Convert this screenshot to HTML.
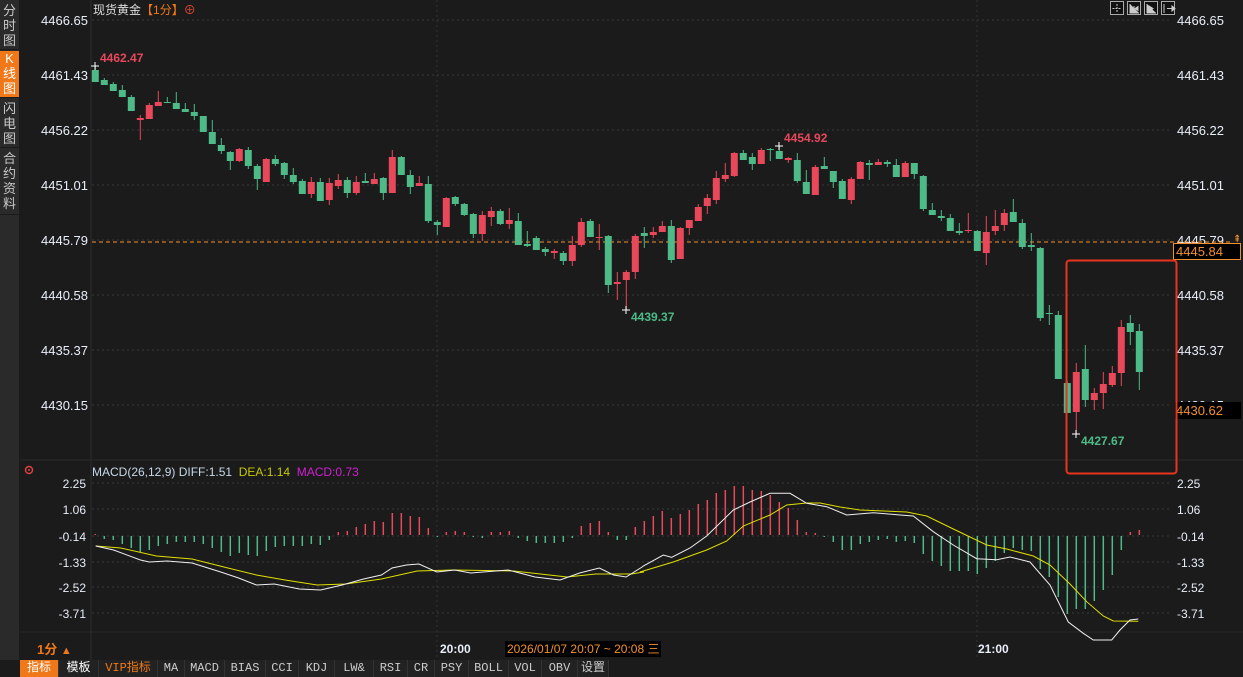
<!DOCTYPE html>
<html><head><meta charset="utf-8"><style>
*{margin:0;padding:0;box-sizing:border-box}
body{width:1243px;height:677px;background:#1b1b1c;overflow:hidden;position:relative;font-family:"Liberation Sans","Noto Sans CJK SC",sans-serif}
.side{position:absolute;left:0;top:0;width:19px;height:660px;background:#2a2a2b}
.side div{position:absolute;left:0;width:19px;color:#c8c8c8;font-size:13px;line-height:15px;text-align:center;border-bottom:1px solid #1b1b1c}
.tb{position:absolute;top:660px;height:17px;font-size:12px;line-height:17px;color:#ccc;text-align:center;background:#222;font-family:"Liberation Mono","Noto Sans CJK SC",monospace;border-right:1px solid #333}
.ax{position:absolute;font-size:13px;color:#e8eef8;line-height:14px}
</style></head><body>
<div class="side">
<div style="top:3px;height:47px">分<br>时<br>图</div>
<div style="top:51px;height:47px;background:#f07818;color:#fff">K<br>线<br>图</div>
<div style="top:101px;height:47px">闪<br>电<br>图</div>
<div style="top:151px;height:64px">合<br>约<br>资<br>料</div>
</div>
<svg id="c" width="1243" height="677" style="position:absolute;left:0;top:0"></svg>
<div class="ax" style="left:93px;top:3px;color:#ddd;font-size:12px">现货黄金<span style="color:#f07818">【1分】</span><span style="color:#e04a30">⊕</span></div>
<div class="ax" style="left:92px;top:465px;font-size:12px;color:#c8d8e8">MACD(26,12,9) DIFF:1.51 &nbsp;<span style="color:#c8c800">DEA:1.14</span> &nbsp;<span style="color:#d020d0">MACD:0.73</span></div>
<div class="ax" style="left:37px;top:643px;color:#f07818;font-weight:bold">1分 <span style="font-size:11px">▲</span></div>
<div class="ax" style="left:440px;top:642px;font-weight:bold;font-size:12px">20:00</div>
<div class="ax" style="left:978px;top:642px;font-weight:bold;font-size:12px">21:00</div>
<div class="ax" style="left:505px;top:641px;background:#000;color:#f09030;font-size:12px;padding:1px 2px">2026/01/07 20:07 ~ 20:08 三</div>
<div class="tb" style="left:20px;width:39px;background:#f07818;color:#fff">指标</div>
<div class="tb" style="left:59px;width:40px;color:#fff">模板</div>
<div class="tb" style="left:99px;width:59px;color:#f07818">VIP指标</div>
<div class="tb" style="left:158px;width:27px">MA</div>
<div class="tb" style="left:185px;width:40px">MACD</div>
<div class="tb" style="left:225px;width:41px">BIAS</div>
<div class="tb" style="left:266px;width:33px">CCI</div>
<div class="tb" style="left:299px;width:36px">KDJ</div>
<div class="tb" style="left:335px;width:39px">LW&amp;</div>
<div class="tb" style="left:374px;width:34px">RSI</div>
<div class="tb" style="left:408px;width:27px">CR</div>
<div class="tb" style="left:435px;width:34px">PSY</div>
<div class="tb" style="left:469px;width:40px">BOLL</div>
<div class="tb" style="left:509px;width:33px">VOL</div>
<div class="tb" style="left:542px;width:36px">OBV</div>
<div class="tb" style="left:578px;width:31px">设置</div>
<script>
var NS="http://www.w3.org/2000/svg",S=document.getElementById('c'),h='';
var G='#4dba87',R='#e8485a';
// grid
[20,75,130,185,240,295,350,405].forEach(function(y){h+='<line x1="92" y1="'+y+'" x2="1172" y2="'+y+'" stroke="#3a3a3a" stroke-dasharray="2,3"/>';});
[483,509,536,562,587,613].forEach(function(y){h+='<line x1="92" y1="'+y+'" x2="1172" y2="'+y+'" stroke="#3a3a3a" stroke-dasharray="2,3"/>';});
[437,977].forEach(function(x){h+='<line x1="'+x+'" y1="0" x2="'+x+'" y2="660" stroke="#333" stroke-dasharray="2,3"/>';});
h+='<line x1="91" y1="0" x2="91" y2="660" stroke="#2c2c2c"/>';
h+='<line x1="20" y1="460" x2="1243" y2="460" stroke="#2a2a2a"/>';
h+='<line x1="20" y1="632" x2="1243" y2="632" stroke="#2a2a2a"/>';
// axis labels
var pl=[['4466.65',20],['4461.43',75],['4456.22',130],['4451.01',185],['4445.79',240],['4440.58',295],['4435.37',350],['4430.15',405]];
pl.forEach(function(p){h+='<text x="88" y="'+(p[1]+5)+'" text-anchor="end" fill="#e8eef8" font-size="13" font-family="Liberation Sans">'+p[0]+'</text><text x="1177" y="'+(p[1]+5)+'" fill="#e8eef8" font-size="13" font-family="Liberation Sans">'+p[0]+'</text>';});
var ml=[['2.25',483],['1.06',509],['-0.14',536],['-1.33',562],['-2.52',587],['-3.71',613]];
ml.forEach(function(p){h+='<text x="86" y="'+(p[1]+5)+'" text-anchor="end" fill="#e8eef8" font-size="12" font-family="Liberation Sans">'+p[0]+'</text><text x="1177" y="'+(p[1]+5)+'" fill="#e8eef8" font-size="12" font-family="Liberation Sans">'+p[0]+'</text>';});
// orange dashed
h+='<line x1="92" y1="242" x2="1233" y2="242" stroke="#f09030" stroke-dasharray="4,3"/>';
h+='<rect x="1173.5" y="243.5" width="67" height="16" fill="#000" stroke="#f09030"/><text x="1176" y="256" fill="#f09030" font-size="13" font-family="Liberation Sans">4445.84</text>';
h+='<rect x="1175" y="402" width="66" height="17" fill="#000"/><text x="1176" y="415" fill="#f09030" font-size="13" font-family="Liberation Sans">4430.62</text>';
h+='<text x="1233" y="242" fill="#f09030" font-size="10">⇞</text>';
// candles
var C=[[70,82,66,82,G],[80,85,78,85,G],[84,91,82,91,G],[90,97,85,97,G],[97,111,95,111,G],[118,120,115,140,R],[105,119,103,119,R],[102,106,91,106,R],[102,103,97,103,G],[103,109,92,109,G],
[109,112,103,112,G],[112,116,104,120,G],[116,132,116,132,G],[132,144,120,144,G],[145,151,138,154,G],[152,161,151,170,G],[149,161,148,162,R],[150,166,147,169,G],[166,179,164,190,G],[159,182,158,182,R],
[159,164,155,166,G],[163,175,162,179,G],[175,182,168,184,G],[181,194,179,194,G],[182,194,177,198,R],[182,201,178,201,G],[183,200,178,205,R],[180,186,174,189,R],[180,193,177,198,G],[182,193,176,195,R],
[181,183,173,183,G],[179,184,173,184,R],[178,193,177,200,G],[157,193,150,193,R],[157,175,156,175,G],[175,187,170,194,G],[183,186,176,186,R],[184,221,176,223,G],[222,225,220,235,G],[198,227,197,227,R],
[197,204,196,206,G],[204,215,203,216,G],[214,234,213,238,G],[215,234,211,241,R],[211,217,207,226,R],[211,224,209,225,G],[220,224,208,229,R],[221,245,213,245,G],[244,246,231,247,G],[238,250,236,250,G],
[249,252,247,256,G],[251,253,249,259,R],[253,261,251,265,G],[245,261,236,266,R],[222,245,218,247,R],[221,237,219,237,G],[237,238,224,250,R],[236,285,235,293,G],[282,284,272,300,R],[272,280,270,310,R],
[236,272,234,279,R],[233,236,227,248,G],[232,235,227,238,R],[226,232,221,232,R],[226,260,220,263,G],[228,259,227,259,R],[220,228,220,235,R],[207,221,204,221,R],[198,206,194,214,R],[178,200,171,204,R],
[175,179,163,182,R],[153,176,152,177,R],[153,160,150,160,G],[157,164,153,170,G],[150,164,148,164,R],[149,150,148,161,G],[151,159,146,159,G],[158,160,157,163,R],[160,181,153,183,G],[182,194,170,194,G],
[167,195,165,195,R],[166,169,157,169,G],[171,182,171,188,G],[181,199,179,199,G],[179,200,177,204,R],[162,179,161,179,R],[163,165,160,180,G],[162,165,159,165,R],[162,164,160,167,G],[165,177,159,177,G],
[163,177,161,177,R],[163,174,163,179,G],[176,209,175,211,G],[210,215,203,215,G],[216,218,210,221,G],[218,231,214,231,G],[231,233,223,235,G],[230,231,213,233,R],[231,251,230,251,G],[232,253,216,265,R],
[226,231,210,235,R],[213,225,209,231,R],[212,222,199,222,G],[223,247,219,249,G],[245,247,233,251,G],[248,318,247,321,G],[313,314,305,325,G],[315,379,311,379,G],[383,413,381,413,G],[372,412,363,434,R],
[369,400,345,407,G],[393,400,388,410,R],[384,393,372,409,R],[373,385,366,387,R],[327,373,320,386,R],[323,332,315,345,G],[331,372,324,390,G]];
C.forEach(function(c,i){var x=95.3+9*i;var bh=Math.max(1,c[1]-c[0]);
h+='<line x1="'+x+'" y1="'+c[2]+'" x2="'+x+'" y2="'+c[3]+'" stroke="'+c[4]+'"/>';
h+='<rect x="'+(x-3.5)+'" y="'+c[0]+'" width="7" height="'+bh+'" fill="'+c[4]+'"/>';});
// markers
function mk(x,y,t,col,tx,ty){h+='<path d="M'+(x-4)+' '+y+'h8M'+x+' '+(y-4)+'v8" stroke="#fff"/><text x="'+tx+'" y="'+ty+'" fill="'+col+'" font-size="12" font-weight="bold" font-family="Liberation Sans">'+t+'</text>';}
mk(95,66,'4462.47',R,100,62);mk(779,146,'4454.92',R,784,142);mk(626,310,'4439.37',G,631,321);mk(1076,434,'4427.67',G,1081,445);
// red box
h+='<rect x="1066.5" y="260.5" width="110" height="213" rx="3" fill="none" stroke="#e8341e" stroke-width="2"/>';
// MACD histogram
var H=[1,-3,-4,-8,-12,-16,-14,-10,-8,-6,-6,-6,-8,-12,-16,-20,-17,-19,-20,-15,-11,-10,-10,-10,-8,-9,-4,3,4,8,11,14,13,22,22,19,18,7,-1,3,4,3,-1,-2,3,3,4,-2,-5,-7,-7,-7,-6,-2,9,12,14,3,-4,-4,8,
14,19,24,17,21,25,31,35,42,45,49,49,45,44,40,33,27,15,3,2,-1,-6,-14,-14,-8,-6,-4,-3,-6,-5,-7,-18,-25,-30,-35,-35,-35,-38,-32,-25,-17,-12,-14,-15,-33,-41,-61,-78,-73,-73,-65,-54,-39,-14,3,5];
H.forEach(function(v,i){var x=95.3+9*i;if(i>=117)return;
if(v>0)h+='<line x1="'+x+'" y1="535" x2="'+x+'" y2="'+(535-v)+'" stroke="'+R+'" stroke-width="1.5"/>';
else h+='<line x1="'+x+'" y1="536" x2="'+x+'" y2="'+(536-v)+'" stroke="'+G+'" stroke-width="1.5"/>';});
function pts(a,ox,sx){return a.map(function(p){return (ox+p[0]/sx).toFixed(1)+','+(460+p[1]/3).toFixed(1);}).join(' ');}
var W1=[[30,258],[80,270],[155,300],[180,306],[230,303],[300,309],[380,336],[430,354],[480,375],[530,372],[600,387],[660,390],[720,375],[780,357],[830,345],[860,324],[900,315],[935,312],[985,336],[1035,330],[1080,339],[1185,330],[1260,351],[1330,360],[1385,339],[1440,324],[1480,345],[1515,351],[1560,321]];
var W2=[[10,318],[70,285],[95,292],[150,264],[200,228],[280,150],[330,126],[390,100],[450,100],[500,130],[560,140],[620,165],[700,158],[780,165],[820,168],[880,215],[940,255],[1010,296],[1070,299],[1110,291],[1170,306],[1230,375],[1285,486],[1330,520],[1360,540],[1415,540],[1440,510],[1470,480],[1495,477]];
var Y1=[[30,258],[100,264],[200,288],[300,297],[400,324],[480,345],[560,360],[650,375],[730,372],[830,357],[930,333],[1030,330],[1200,333],[1300,345],[1350,351],[1430,342],[1530,342],[1565,336]];
var Y2=[[0,336],[100,306],[200,270],[260,243],[310,198],[390,165],[440,135],[500,129],[540,129],[600,141],[660,150],[800,156],[860,168],[940,207],[1040,255],[1100,267],[1180,288],[1230,315],[1290,372],[1340,425],[1390,468],[1420,483],[1495,484]];
h+='<polyline fill="none" stroke="#e0e000" points="'+pts(Y1,85,2.8)+' '+pts(Y2,640,3)+'"/>';
h+='<polyline fill="none" stroke="#f0f0f0" points="'+pts(W1,85,2.8)+' '+pts(W2,640,3)+'"/>';
// icons
h+='<circle cx="29" cy="470" r="3.5" fill="none" stroke="#e04040" stroke-width="1.5"/><circle cx="29" cy="470" r="1" fill="#e04040"/>';
[1110,1127,1144,1161].forEach(function(x,i){h+='<rect x="'+x+'.5" y="1.5" width="13" height="13" fill="#111" stroke="#aaa"/>';});
h+='<path d="M1117 4v9M1112.5 8.5h9" stroke="#ccc" stroke-dasharray="2,1"/>';
h+='<path d="M1130 4v9h9M1134 6v5M1135 8.5l3-2v4z" stroke="#ccc" fill="#ccc"/>';
h+='<path d="M1147 4v9h9M1149 6v5l4-2.5z" stroke="#ccc" fill="#ccc"/>';
h+='<path d="M1164 4v9M1167 8.5h5M1172 6v5l3-2.5z" stroke="#ccc" fill="#ccc"/>';
S.innerHTML=h;
</script>
</body></html>
